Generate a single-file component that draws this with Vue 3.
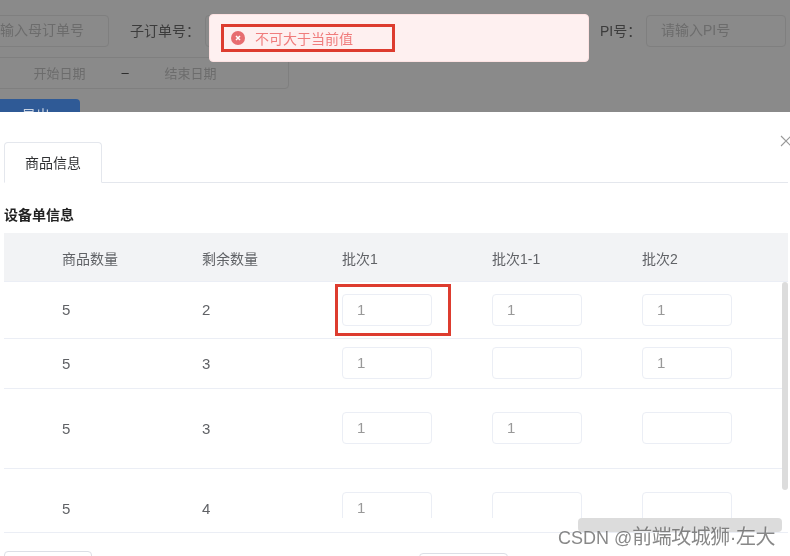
<script setup>
const columns = ['商品数量', '剩余数量', '批次1', '批次1-1', '批次2']
const rows = [
  { id: 1, height: 57, tight: false, qty: 5, left: 2, batches: ['1', '1', '1'] },
  { id: 2, height: 50, tight: true, qty: 5, left: 3, batches: ['1', '', '1'] },
  { id: 3, height: 80, tight: true, qty: 5, left: 3, batches: ['1', '1', ''] },
  { id: 4, height: 79, tight: false, qty: 5, left: 4, batches: ['1', '', ''] }
]
</script>

<template>
  <div class="page">
    <section class="backdrop">
      <div class="filter-row first">
        <div class="field mother">请输入母订单号</div>
        <span class="label sub-label">子订单号：</span>
        <div class="field sub"></div>
        <span class="label pi-label">PI号：</span>
        <div class="field pi">请输入PI号</div>
      </div>
      <div class="date-range">
        <span class="date">开始日期</span>
        <span class="sep">–</span>
        <span class="date">结束日期</span>
      </div>
      <div class="export">导出</div>
    </section>

    <section class="dialog">
      <svg class="close" width="12" height="12" viewBox="0 0 12 12">
        <path d="M1 1L11 11M11 1L1 11" stroke="#999" stroke-width="1.1" fill="none" />
      </svg>
      <div class="tabs"><div class="tab">商品信息</div></div>
      <h3 class="title">设备单信息</h3>
      <div class="table">
        <div class="grid head">
          <span v-for="c in columns" :key="c">{{ c }}</span>
        </div>
        <div class="body">
          <div
            v-for="r in rows"
            :key="r.id"
            class="grid row"
            :class="{ tight: r.tight, top: r.id === 1 }"
            :style="{ height: r.height + 'px' }"
          >
            <span class="num">{{ r.qty }}</span>
            <span class="num">{{ r.left }}</span>
            <div v-for="(b, i) in r.batches" :key="i" class="cell-input">
              {{ b }}
              <i v-if="r.id === 1 && i === 0" class="mark"></i>
            </div>
          </div>
        </div>
        <div class="table-end"></div>
        <i class="vbar"></i>
        <i class="hbar"></i>
      </div>
      <div class="footer">
        <div class="btn left-btn"></div>
        <div class="btn mid-btn"></div>
      </div>
    </section>

    <div class="message">
      <div class="message-mark">
        <svg width="14" height="14" viewBox="0 0 14 14">
          <circle cx="7" cy="7" r="7" fill="#e76d70" />
          <path d="M5 5L9 9M9 5L5 9" stroke="#fff" stroke-width="1.5" fill="none" />
        </svg>
        <span>不可大于当前值</span>
      </div>
    </div>

    <div class="watermark"><span class="wm-latin">CSDN @</span>前端攻城狮·左大</div>
  </div>
</template>

<style>
html, body { margin: 0; background: #fff; }
</style>

<style scoped>
.page {
  position: relative;
  width: 790px;
  height: 556px;
  overflow: hidden;
  font-family: "Liberation Sans", "Noto Sans CJK SC", sans-serif;
  font-size: 14px;
  color: #606266;
  will-change: transform;
}
.backdrop {
  height: 112px;
  overflow: hidden;
  background: #8a8a8a;
  box-sizing: border-box;
  padding-top: 15px;
}
.filter-row {
  display: flex;
  align-items: center;
  height: 32px;
  margin-left: -32px;
}
.field {
  box-sizing: border-box;
  flex: none;
  width: 140px;
  height: 32px;
  line-height: 28px;
  border: 1px solid #7f7f7f;
  border-radius: 4px;
  padding-left: 14px;
  color: #6c6c6c;
}
.mother { width: 141px; padding-left: 17px; }
.label { color: #3c3c3c; padding-bottom: 2px; flex: none; }
.sub-label { margin-left: 21px; width: 75px; }
.sub { width: 345px; }
.pi-label { margin-left: 50px; width: 46px; }
.date-range {
  box-sizing: border-box;
  display: flex;
  justify-content: center;
  align-items: center;
  width: 330px;
  height: 32px;
  margin: 10px 0 0 -41px;
  padding: 0 0 2px 2px;
  border: 1px solid #7f7f7f;
  border-radius: 4px;
  color: #6c6c6c;
  font-size: 13px;
}
.date { width: 111px; text-align: center; }
.sep { width: 20px; text-align: center; color: #222; }
.export {
  width: 88px;
  height: 32px;
  line-height: 32px;
  margin: 10px 0 0 -8px;
  border-radius: 4px;
  background: #2f5a96;
  color: #c9d3e2;
  text-align: center;
}
.dialog {
  position: relative;
  height: 444px;
  padding: 30px 0 0 4px;
  box-sizing: border-box;
  background: #fff;
  overflow: hidden;
}
.close { position: absolute; top: 23px; left: 780px; }
.tabs {
  width: 784px;
  height: 41px;
  box-sizing: border-box;
  border-bottom: 1px solid #e4e7ed;
}
.tab {
  box-sizing: border-box;
  width: 98px;
  height: 41px;
  line-height: 40px;
  text-align: center;
  border: 1px solid #e4e7ed;
  border-bottom-color: #fff;
  border-radius: 4px 4px 0 0;
  color: #303133;
}
.title {
  margin: 0;
  padding-top: 22px;
  height: 28px;
  line-height: 20px;
  font-size: 14px;
  font-weight: 700;
  color: #222;
  box-sizing: content-box;
}
.table { position: relative; width: 784px; }
.grid {
  display: grid;
  grid-template-columns: 140px 140px 150px 150px 1fr;
  align-items: center;
  padding-left: 58px;
  box-sizing: border-box;
  border-bottom: 1px solid #ebeef5;
}
.head { height: 49px; background: #f2f3f5; }
.head span { padding-top: 2px; }
.tight { padding-bottom: 1px; }
.num { font-size: 15px; }
.top .num { padding-bottom: 2px; }
.body { height: 236px; overflow: hidden; }
.table-end { height: 14px; border-bottom: 1px solid #ebeef5; box-sizing: content-box; }
.cell-input {
  position: relative;
  box-sizing: border-box;
  width: 90px;
  height: 32px;
  line-height: 30px;
  border: 1px solid #ebeef5;
  border-radius: 4px;
  padding-left: 14px;
  font-size: 15px;
  color: #999;
}
.mark {
  position: absolute;
  left: -8px;
  top: -11px;
  width: 116px;
  height: 52px;
  box-sizing: border-box;
  border: 3px solid #dd3c2f;
}
.vbar {
  position: absolute;
  left: 778px;
  top: 49px;
  width: 6px;
  height: 208px;
  border-radius: 3px;
  background: #dcdcdc;
}
.hbar {
  position: absolute;
  left: 574px;
  top: 285px;
  width: 204px;
  height: 14px;
  border-radius: 4px;
  background: #dcdcdc;
}
.footer {
  display: flex;
  padding-top: 18px;
  align-items: flex-start;
}
.btn {
  box-sizing: border-box;
  height: 32px;
  border: 1px solid #dcdfe6;
  border-radius: 4px;
  background: #fff;
}
.left-btn { width: 88px; }
.mid-btn { width: 89px; margin: 2px 0 0 327px; }
.message {
  position: absolute;
  left: 209px;
  top: 14px;
  box-sizing: border-box;
  width: 380px;
  height: 48px;
  padding: 9px 0 0 11px;
  background: #fef0f0;
  border: 1px solid #fde2e2;
  border-radius: 4px;
}
.message-mark {
  box-sizing: border-box;
  display: flex;
  align-items: center;
  gap: 10px;
  width: 174px;
  height: 28px;
  padding-left: 7px;
  border: 3px solid #dd3c2f;
  color: #f07c7c;
}
.message-mark span { padding-bottom: 1px; }
.watermark {
  position: absolute;
  left: 558px;
  top: 524px;
  font-size: 20px;
  line-height: 26px;
  letter-spacing: -0.5px;
  white-space: nowrap;
  color: rgba(80, 80, 80, 0.68);
  text-shadow: 1px 1px 1px rgba(255, 255, 255, 0.6);
}
.wm-latin { font-size: 18px; letter-spacing: 0; }
</style>
